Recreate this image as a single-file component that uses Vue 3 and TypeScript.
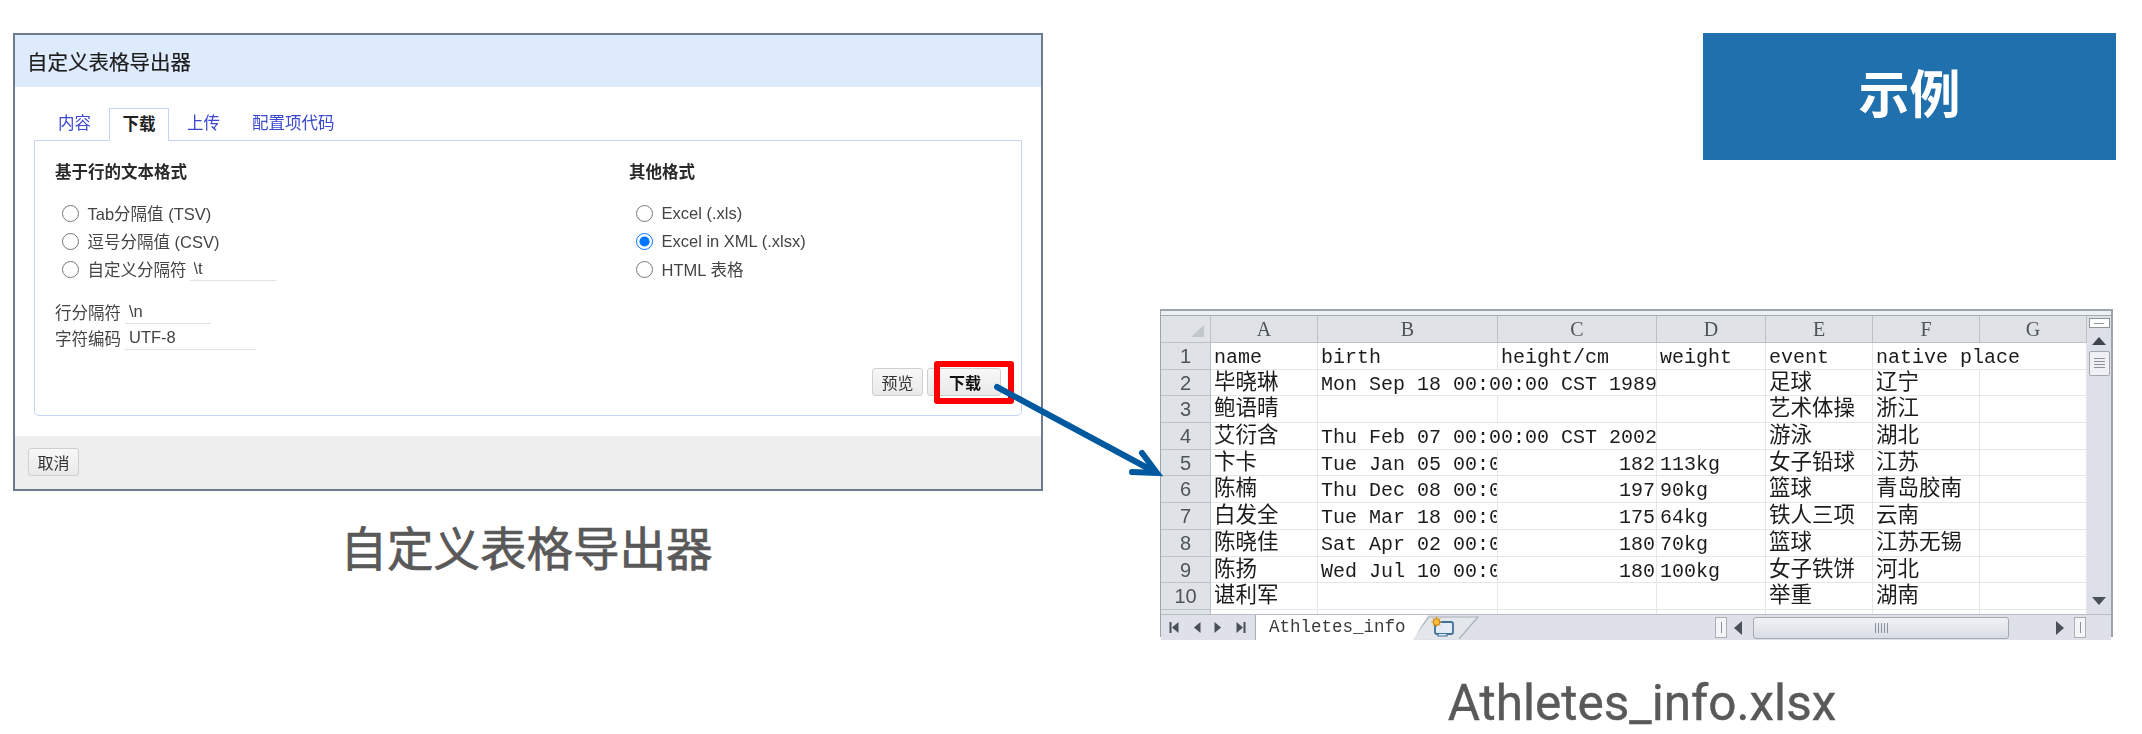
<script setup lang="ts">
const columns = ['A', 'B', 'C', 'D', 'E', 'F', 'G']

const rows: string[][] = [
  ['name', 'birth', 'height/cm', 'weight', 'event', 'native place', ''],
  ['毕晓琳', 'Mon Sep 18 00:00:00 CST 1989', '', '', '足球', '辽宁', ''],
  ['鲍语晴', '', '', '', '艺术体操', '浙江', ''],
  ['艾衍含', 'Thu Feb 07 00:00:00 CST 2002', '', '', '游泳', '湖北', ''],
  ['卞卡', 'Tue Jan 05 00:0', '182', '113kg', '女子铅球', '江苏', ''],
  ['陈楠', 'Thu Dec 08 00:0', '197', '90kg', '篮球', '青岛胶南', ''],
  ['白发全', 'Tue Mar 18 00:0', '175', '64kg', '铁人三项', '云南', ''],
  ['陈晓佳', 'Sat Apr 02 00:0', '180', '70kg', '篮球', '江苏无锡', ''],
  ['陈扬', 'Wed Jul 10 00:0', '180', '100kg', '女子铁饼', '河北', ''],
  ['谌利军', '', '', '', '举重', '湖南', ''],
  ['', '', '', '', '', '', ''],
]

const spill = new Set(['0-5', '1-1', '3-1'])

function cellClass(r: number, c: number, text: string) {
  return {
    cell: true,
    spill: spill.has(`${r}-${c}`),
    num: /^\d+$/.test(text),
    cjk: /[\u4e00-\u9fff]/.test(text),
  }
}

const lineFormats = [
  { label: 'Tab分隔值 (TSV)' },
  { label: '逗号分隔值 (CSV)' },
]
const otherFormats = [
  { label: 'Excel (.xls)', checked: false },
  { label: 'Excel in XML (.xlsx)', checked: true },
  { label: 'HTML 表格', checked: false },
]
</script>

<template>
  <div class="slide">
    <section class="left">
      <div class="dialog">
        <header class="dlg-head">自定义表格导出器</header>
        <div class="dlg-body">
          <nav class="tabs">
            <span class="tab">内容</span>
            <span class="tab active">下载</span>
            <span class="tab">上传</span>
            <span class="tab">配置项代码</span>
          </nav>
          <div class="panel">
            <div class="cols">
              <div class="col first">
                <h4 class="sec">基于行的文本格式</h4>
                <label v-for="f in lineFormats" :key="f.label" class="radio">
                  <input type="radio" name="fmt-a" />{{ f.label }}
                </label>
                <label class="radio">
                  <input type="radio" name="fmt-a" />自定义分隔符
                  <input class="field custom" type="text" value="\t" />
                </label>
                <div class="fields">
                  <div class="field-row">
                    <span>行分隔符</span>
                    <input class="field short" type="text" value="\n" />
                  </div>
                  <div class="field-row">
                    <span>字符编码</span>
                    <input class="field long" type="text" value="UTF-8" />
                  </div>
                </div>
              </div>
              <div class="col">
                <h4 class="sec">其他格式</h4>
                <label v-for="f in otherFormats" :key="f.label" class="radio">
                  <input type="radio" name="fmt-b" :checked="f.checked" />{{ f.label }}
                </label>
              </div>
            </div>
            <div class="actions">
              <button class="btn preview">预览</button>
              <button class="btn download">下载</button>
            </div>
          </div>
        </div>
        <footer class="dlg-foot">
          <button class="btn cancel">取消</button>
        </footer>
      </div>
      <p class="caption">自定义表格导出器</p>
    </section>

    <section class="right">
      <div class="badge">示例</div>
      <div class="excel">
        <div class="strip"></div>
        <div class="sheet">
          <div class="grid">
            <div class="corner"><i></i></div>
            <div v-for="c in columns" :key="c" class="col-head">{{ c }}</div>
            <template v-for="(row, r) in rows" :key="r">
              <div class="row-head">{{ r < 10 ? r + 1 : '' }}</div>
              <div v-for="(text, c) in row" :key="c" :class="cellClass(r, c, text)">{{ text }}</div>
            </template>
          </div>
          <div class="vscroll">
            <div class="split-top"><i></i></div>
            <svg class="arrow-up" width="14" height="8" viewBox="0 0 14 8"><path d="M7 0 14 8H0z" fill="#3f454c" /></svg>
            <div class="vthumb"><i></i><i></i><i></i><i></i></div>
            <svg class="arrow-down" width="14" height="8" viewBox="0 0 14 8"><path d="M0 0H14L7 8z" fill="#4a5058" /></svg>
          </div>
        </div>
        <div class="sheetbar">
          <div class="nav">
            <svg width="12" height="13" viewBox="0 0 12 13"><path d="M1.5 1h2v11h-2zM10.5 1v11L4 6.5z" fill="#4a5058" /></svg>
            <svg width="8" height="13" viewBox="0 0 8 13"><path d="M7.5 1v11L1 6.5z" fill="#4a5058" /></svg>
            <svg width="8" height="13" viewBox="0 0 8 13"><path d="M.5 1v11L7 6.5z" fill="#4a5058" /></svg>
            <svg width="12" height="13" viewBox="0 0 12 13"><path d="M1.5 1v11L8 6.5zM8.5 1h2v11h-2z" fill="#4a5058" /></svg>
          </div>
          <div class="sheet-tab">Athletes_info</div>
          <svg class="new-sheet" width="68" height="23" viewBox="0 0 68 23">
            <path d="M0 23 17 1H66L47 23" fill="#e3e6eb" stroke="#aab0b8" stroke-width="1.2" />
            <rect x="23" y="6" width="18" height="12" rx="2" fill="#e4edf7" stroke="#3f7199" stroke-width="1.8" />
            <path d="M26 18v2h9v-2" fill="#e4edf7" stroke="#3f7199" stroke-width="1.2" />
            <path d="M24.5 0.5v10.5M19 6h11M20.6 2.1l7.8 7.8M28.4 2.1l-7.8 7.8" stroke="#e9a227" stroke-width="1" />
            <circle cx="24.5" cy="6" r="3.4" fill="#f6bb3f" stroke="#c97d10" stroke-width="1" />
          </svg>
          <div class="bar-fill"></div>
          <div class="hsplit"><i></i></div>
          <svg class="h-left" width="8" height="14" viewBox="0 0 8 14"><path d="M8 0V14L0 7z" fill="#4a5058" /></svg>
          <div class="hthumb"><i></i><i></i><i></i><i></i><i></i></div>
          <svg class="h-right" width="8" height="14" viewBox="0 0 8 14"><path d="M0 0V14L8 7z" fill="#4a5058" /></svg>
          <div class="hsplit end"><i></i></div>
          <div class="bar-corner"></div>
        </div>
      </div>
      <p class="caption latin">Athletes_info.xlsx</p>
    </section>

    <svg class="overlay" width="2142" height="734" viewBox="0 0 2142 734">
      <rect x="937" y="364" width="74" height="37" fill="none" stroke="#ff0000" stroke-width="6" stroke-linejoin="round" />
      <path d="M997 387 1155 472" fill="none" stroke="#00599f" stroke-width="6" stroke-linecap="round" />
      <path d="M1142 453 1157 473 1132 472" fill="none" stroke="#00599f" stroke-width="6" stroke-linecap="round" stroke-linejoin="miter" />
    </svg>
  </div>
</template>

<style scoped>
.slide {
  position: relative;
  width: 2142px;
  height: 734px;
  box-sizing: border-box;
  padding: 33px 0 0 13px;
  display: flex;
  overflow: hidden;
  background: #fff;
  font-family: "Liberation Sans", "Noto Sans CJK SC", sans-serif;
}
.left {
  width: 1030px;
  flex: none;
}
.right {
  width: 953px;
  margin-left: 117px;
  flex: none;
}
.caption {
  margin: 31px 3px 0 0;
  text-align: center;
  font-size: 46.5px;
  line-height: 56px;
  color: #595959;
  -webkit-text-stroke: 0.7px #595959;
}
.caption.latin {
  margin: 36px 0 0;
  padding-left: 11px;
  font-family: Roboto, "Liberation Sans", sans-serif;
  font-size: 49.5px;
  line-height: 60px;
  -webkit-text-stroke: 0.4px #595959;
}

/* dialog */
.dialog {
  height: 458px;
  box-sizing: border-box;
  border: 2px solid #6c7b90;
  display: flex;
  flex-direction: column;
  filter: blur(0.35px);
}
.dlg-head {
  height: 52px;
  padding-left: 12px;
  line-height: 55px;
  font-size: 20.5px;
  color: #1d1d1d;
  -webkit-text-stroke: 0.2px #1d1d1d;
  background: #deebfd;
}
.dlg-body {
  flex: 1;
  padding: 21px 19px 0;
}
.tabs {
  display: flex;
  gap: 4px;
  margin-left: 10px;
  height: 33px;
}
.tab {
  padding: 0 14px;
  line-height: 30px;
  font-size: 16.5px;
  color: #3c48d0;
}
.tab.active {
  position: relative;
  z-index: 1;
  box-sizing: border-box;
  height: 33px;
  padding: 0 12.5px;
  border: 1.5px solid #c5d4f7;
  border-bottom: 0;
  background: #fff;
  color: #222;
  font-weight: 700;
}
.panel {
  height: 276px;
  box-sizing: border-box;
  margin-top: -1px;
  padding: 19px 20px 0;
  border: 1.5px solid #c5d4f7;
  border-radius: 0 0 5px 5px;
  display: flex;
  flex-direction: column;
}
.cols {
  display: flex;
}
.col.first {
  width: 574px;
  flex: none;
}
.sec {
  margin: 0 0 15px;
  font-size: 16.5px;
  line-height: 24px;
  font-weight: 700;
  color: #2a2a2a;
}
.radio {
  display: flex;
  align-items: center;
  height: 28px;
  font-size: 16.5px;
  color: #444;
}
.radio input[type="radio"] {
  width: 17px;
  height: 17px;
  margin: 0 9px 0 6.5px;
  flex: none;
}
.field {
  box-sizing: border-box;
  border: 0;
  border-bottom: 1.5px solid #e2e2e2;
  outline: 0;
  padding: 0 0 0 4px;
  height: 24px;
  font: inherit;
  font-size: 16.5px;
  color: #444;
  background: transparent;
}
.field.custom {
  width: 86px;
  margin-left: 3px;
}
.field.short {
  width: 86px;
}
.field.long {
  width: 131px;
}
.fields {
  margin-top: 16px;
}
.field-row {
  display: flex;
  align-items: center;
  gap: 4px;
  height: 26px;
  font-size: 16.5px;
  color: #444;
}
.actions {
  display: flex;
  justify-content: flex-end;
  gap: 4px;
  margin-top: 17px;
}
.btn {
  box-sizing: border-box;
  height: 28px;
  border: 1.5px solid #d0d0d0;
  border-radius: 3px;
  padding: 0;
  font: inherit;
  font-size: 16px;
  color: #333;
  background: linear-gradient(#f8f8f8, #e9e9e9);
}
.btn.preview {
  width: 51px;
}
.btn.download {
  width: 74px;
  color: #111;
  font-weight: 700;
  text-align: left;
  padding-left: 21px;
}
.btn.cancel {
  width: 51px;
}
.dlg-foot {
  height: 53px;
  box-sizing: border-box;
  padding: 12px 0 0 13px;
  background: #eeeeee;
}

/* badge */
.badge {
  width: 413px;
  height: 127px;
  margin-left: 543px;
  line-height: 125px;
  text-align: center;
  font-size: 51px;
  font-weight: 700;
  color: #fff;
  background: #1f70ad;
}

/* spreadsheet */
.excel {
  margin-top: 149px;
  height: 328px;
  box-sizing: border-box;
  border: 1px solid #9ea4ac;
  border-width: 2px 2px 2px 1px;
  display: flex;
  flex-direction: column;
  background: #fff;
  filter: blur(0.35px);
}
.strip {
  height: 4px;
  flex: none;
  background: #edf0f4;
  border-bottom: 1px solid #a5abb3;
}
.sheet {
  display: flex;
  height: 298px;
  flex: none;
}
.grid {
  width: 926px;
  height: 298px;
  flex: none;
  overflow: hidden;
  display: grid;
  grid-template-columns: 50px 107px 180px 159px 109px 107px 107px 107px;
  grid-template-rows: 27px repeat(11, 26.7px);
}
.corner,
.col-head,
.row-head {
  box-sizing: border-box;
  background: #dfe3e8;
  border-right: 1.5px solid #bcc1c8;
  border-bottom: 1.5px solid #bcc1c8;
  color: #4f545a;
  text-align: center;
}
.corner {
  position: relative;
}
.corner i {
  position: absolute;
  right: 6px;
  bottom: 5px;
  width: 13px;
  height: 12px;
  background: #c2c7cd;
  clip-path: polygon(100% 0, 100% 100%, 0 100%);
}
.col-head {
  font: 20px/27px "Liberation Serif", serif;
}
.row-head {
  font: 20px/27px "Liberation Sans", sans-serif;
}
.cell {
  box-sizing: border-box;
  min-width: 0;
  overflow: hidden;
  white-space: nowrap;
  padding-left: 3px;
  border-right: 1.5px solid #e4e6e9;
  border-bottom: 1.5px solid #e4e6e9;
  font: 20px/30px "Liberation Mono", "Noto Sans CJK SC", monospace;
  color: #1c1c1c;
}
.cell.spill {
  overflow: visible;
  border-right-color: transparent;
}
.cell.num {
  text-align: right;
  padding-right: 1px;
}
.cell.cjk {
  font-size: 21.5px;
  line-height: 27px;
}
.vscroll {
  width: 24px;
  flex: none;
  box-sizing: border-box;
  display: flex;
  flex-direction: column;
  align-items: center;
  background: #dde1e7;
}
.split-top {
  width: 21px;
  height: 10px;
  margin-top: 2px;
  box-sizing: border-box;
  background: #fff;
  border: 1.5px solid #8f959d;
  display: flex;
  align-items: center;
  justify-content: center;
}
.split-top i {
  width: 10px;
  height: 1px;
  background: #8f959d;
}
.arrow-up {
  margin-top: 9px;
}
.vthumb {
  width: 21px;
  height: 25px;
  margin-top: 6px;
  box-sizing: border-box;
  padding-top: 6px;
  background: #eef0f4;
  border: 1.5px solid #a2a8b0;
  border-radius: 2px;
}
.vthumb i {
  display: block;
  width: 11px;
  height: 1px;
  margin: 0 auto 2px;
  background: #8b9199;
}
.arrow-down {
  margin-top: auto;
  margin-bottom: 9px;
}
.sheetbar {
  flex: 1;
  display: flex;
  align-items: center;
  background: #dee2e8;
  border-top: 1px solid #b8bdc4;
  box-sizing: border-box;
}
.nav {
  width: 95px;
  flex: none;
  box-sizing: border-box;
  height: 100%;
  display: flex;
  align-items: center;
  gap: 13px;
  padding-left: 7px;
  border-right: 1.5px solid #a9afb7;
}
.sheet-tab {
  width: 172px;
  height: 100%;
  flex: none;
  box-sizing: border-box;
  padding-left: 13px;
  font: 17.5px/25px "Liberation Mono", monospace;
  color: #3b3b3b;
  background: #fff;
  clip-path: polygon(0 0, 100% 0, calc(100% - 15px) 100%, 0 100%);
}
.new-sheet {
  flex: none;
  margin-left: -16px;
}
.bar-fill {
  flex: 1;
}
.hsplit {
  width: 12px;
  height: 21px;
  flex: none;
  box-sizing: border-box;
  background: #f4f5f7;
  border: 1.5px solid #a9afb7;
  display: flex;
  align-items: center;
  justify-content: center;
}
.hsplit i {
  width: 1px;
  height: 11px;
  background: #8b9199;
}
.h-left {
  flex: none;
  margin: 0 11px 0 7px;
}
.hthumb {
  width: 256px;
  height: 22px;
  flex: none;
  box-sizing: border-box;
  display: flex;
  align-items: center;
  justify-content: center;
  gap: 2px;
  background: linear-gradient(#f0f2f6, #d9dde4);
  border: 1.5px solid #a3a9b1;
  border-radius: 3px;
}
.hthumb i {
  width: 1px;
  height: 10px;
  background: #8b9199;
}
.h-right {
  flex: none;
  margin: 0 10px 0 47px;
}
.bar-corner {
  width: 25px;
  flex: none;
}

.overlay {
  position: absolute;
  left: 0;
  top: 0;
  pointer-events: none;
}
</style>
